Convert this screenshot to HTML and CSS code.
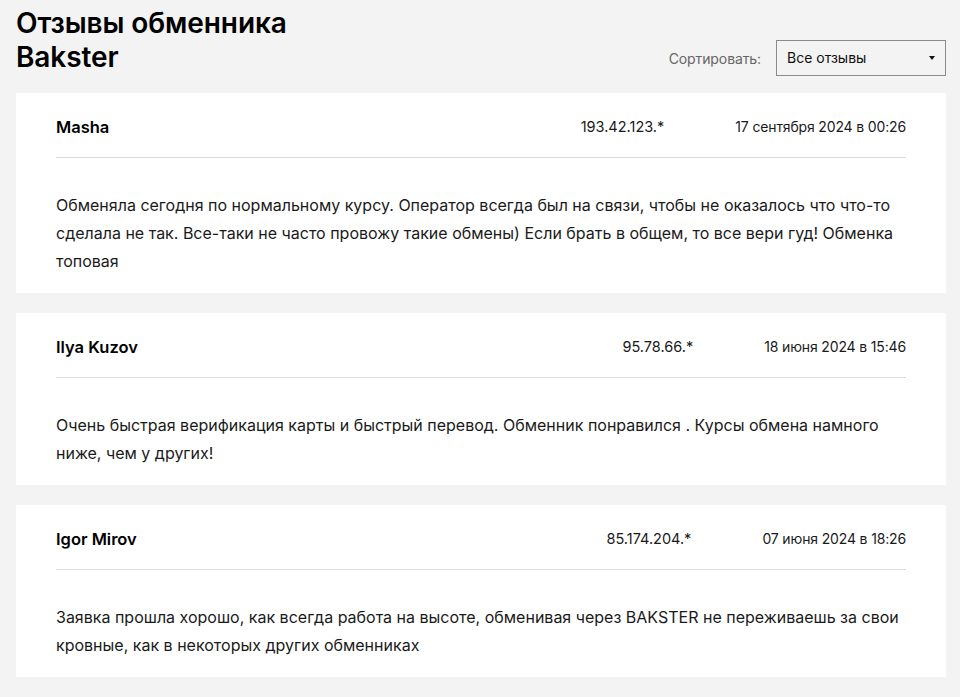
FILE: index.html
```html
<!DOCTYPE html>
<html lang="ru">
<head>
<meta charset="utf-8">
<title>Отзывы обменника Bakster</title>
<link rel="stylesheet" href="styles.css">
</head>
<body>
<div class="page">
  <header class="top">
    <h1 class="title">Отзывы обменника<br>Bakster</h1>
    <div class="sort">
      <span class="sort-label">Сортировать:</span>
      <div class="select">
        <span>Все отзывы</span>
        <span class="arrow"></span>
      </div>
    </div>
  </header>

  <div class="list">
    <article class="card">
      <div class="card-head">
        <span class="name">Masha</span>
        <span class="ip">193.42.123.*</span>
        <span class="date">17 сентября 2024 в 00:26</span>
      </div>
      <p class="text">Обменяла сегодня по нормальному курсу. Оператор всегда был на связи, чтобы не оказалось что что-то сделала не так. Все-таки не часто провожу такие обмены) Если брать в общем, то все вери гуд! Обменка топовая</p>
    </article>

    <article class="card">
      <div class="card-head">
        <span class="name">Ilya Kuzov</span>
        <span class="ip">95.78.66.*</span>
        <span class="date">18 июня 2024 в 15:46</span>
      </div>
      <p class="text">Очень быстрая верификация карты и быстрый перевод. Обменник понравился . Курсы обмена намного ниже, чем у других!</p>
    </article>

    <article class="card">
      <div class="card-head">
        <span class="name">Igor Mirov</span>
        <span class="ip">85.174.204.*</span>
        <span class="date">07 июня 2024 в 18:26</span>
      </div>
      <p class="text">Заявка прошла хорошо, как всегда работа на высоте, обменивая через BAKSTER не переживаешь за свои кровные, как в некоторых других обменниках</p>
    </article>
  </div>
</div>
</body>
</html>
```

FILE: styles.css
```css
* { box-sizing: border-box; }
html, body { margin: 0; padding: 0; }
body {
  background: #f3f3f3;
  font-family: Inter, "Noto Sans", sans-serif;
  color: #1a1a1a;
}
.page {
  padding: 6px 14px 20px 16px;
}
.top {
  display: flex;
  justify-content: space-between;
  align-items: flex-end;
  margin-bottom: 17px;
}
.title {
  margin: 0 0 2px 0;
  font-size: 28px;
  line-height: 34px;
  font-weight: 600;
  color: #000;
  letter-spacing: -0.1px;
}
.sort {
  display: flex;
  align-items: center;
  gap: 15px;
}
.sort-label {
  font-size: 14px;
  color: #666;
  letter-spacing: -0.1px;
}
.select {
  width: 170px;
  height: 36px;
  border: 1px solid #8a8a8a;
  display: flex;
  align-items: center;
  justify-content: space-between;
  padding: 0 10px 1px 10px;
  font-size: 14px;
  color: #111;
}
.arrow {
  width: 0;
  height: 0;
  border-left: 3px solid transparent;
  border-right: 3px solid transparent;
  border-top: 4px solid #111;
}
.list {
  display: flex;
  flex-direction: column;
  gap: 20px;
}
.card {
  background: #fff;
  padding: 0 40px 18px 40px;
}
.card-head {
  display: flex;
  align-items: center;
  padding: 21px 0 18px;
  border-bottom: 1px solid #dcdcdc;
  height: 65px;
}
.name {
  font-size: 16.5px;
  font-weight: 600;
  color: #000;
  flex: 1;
}
.ip {
  font-size: 14.5px;
  color: #1a1a1a;
  margin-right: 71px;
}
.date {
  font-size: 14px;
  letter-spacing: -0.15px;
  color: #1a1a1a;
}
.text {
  margin: 0;
  padding-top: 33px;
  font-size: 16px;
  line-height: 28px;
  color: #1a1a1a;
}
```
